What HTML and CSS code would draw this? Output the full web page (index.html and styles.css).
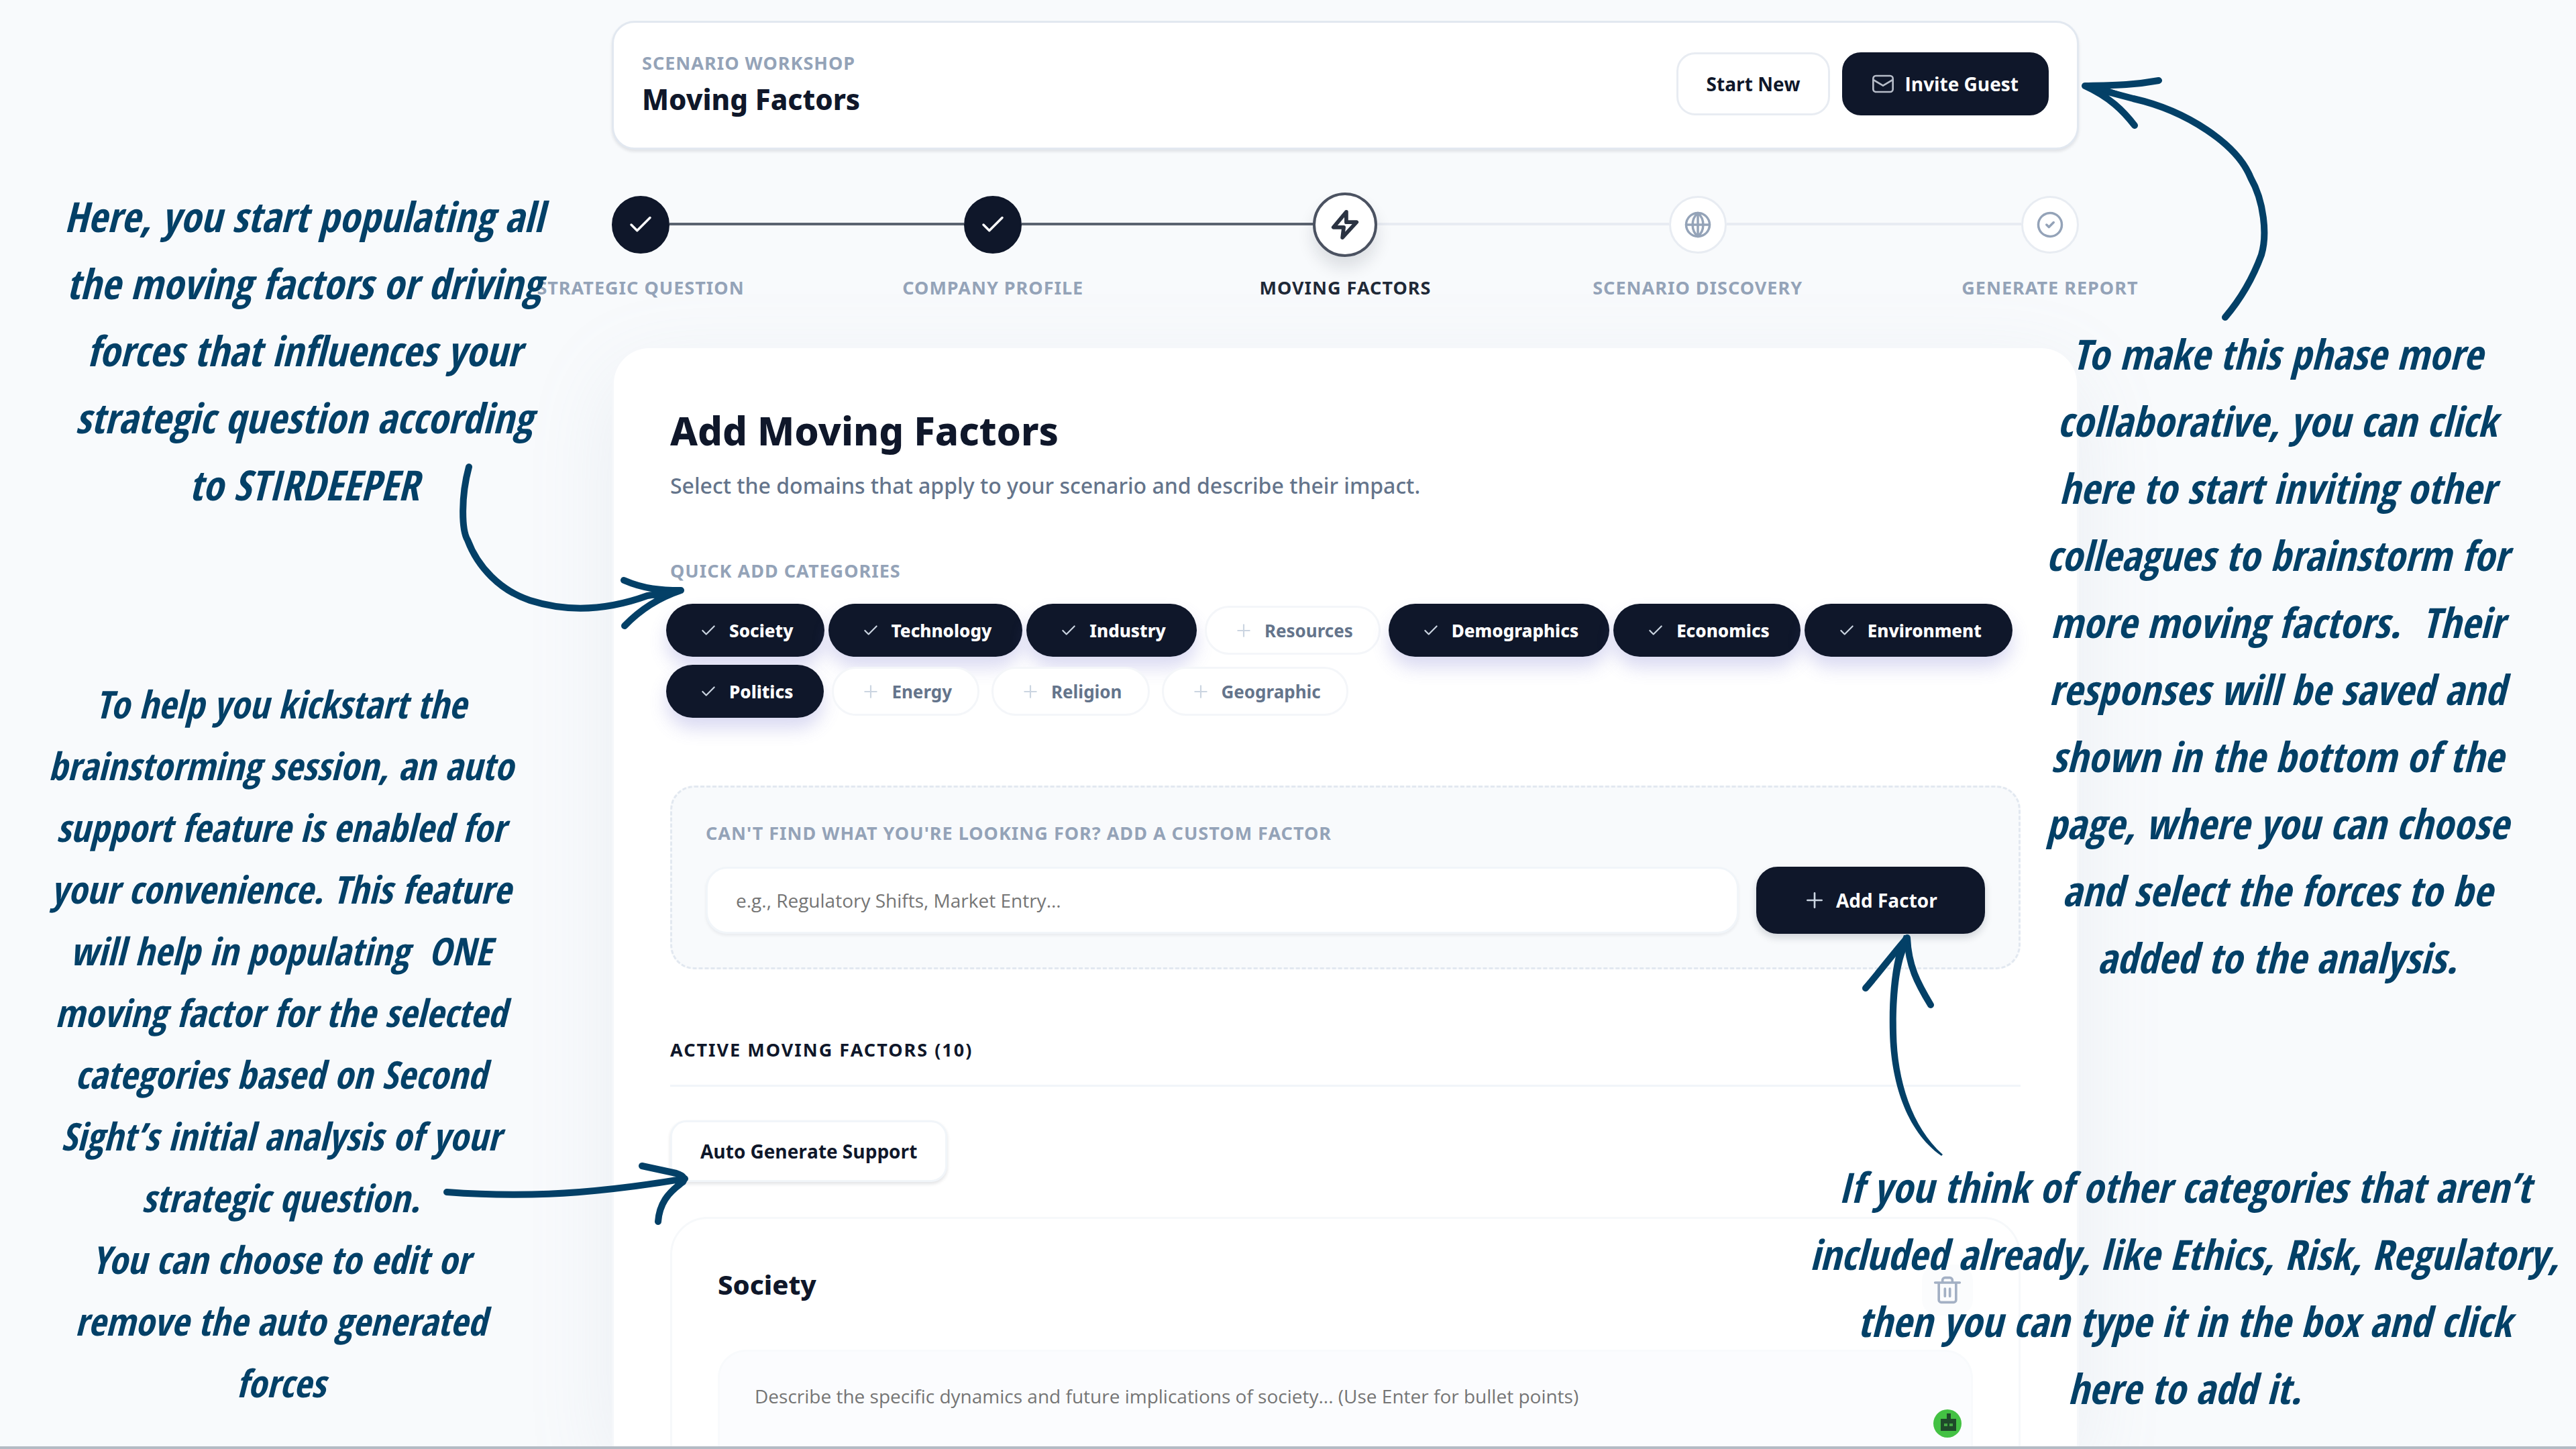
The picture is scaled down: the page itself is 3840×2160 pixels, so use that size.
FILE: index.html
```html
<!DOCTYPE html>
<html lang="en">
<head>
<meta charset="utf-8">
<meta name="viewport" content="width=device-width, initial-scale=1">
<title>Scenario Workshop - Moving Factors</title>
<link rel="stylesheet" href="styles.css">
</head>
<body>
<svg class="sprite" aria-hidden="true">
  <symbol id="check" viewBox="0 0 24 24"><path d="M20 6 9 17l-5-5"/></symbol>
  <symbol id="plus" viewBox="0 0 24 24"><path d="M12 4v16M4 12h16"/></symbol>
</svg>
<div class="page">
  <div class="workspace">
    <header class="topbar">
      <div class="topbar-text">
        <p class="eyebrow">SCENARIO WORKSHOP</p>
        <h1 class="topbar-title">Moving Factors</h1>
      </div>
      <div class="topbar-actions">
        <button class="btn btn-light" type="button">Start New</button>
        <button class="btn btn-dark" type="button">
          <svg class="icon icon-mail" viewBox="0 0 24 24"><rect x="1" y="3" width="22" height="18" rx="3"/><path d="m2 8 10 6 10-6"/></svg>
          Invite Guest
        </button>
      </div>
    </header>

    <ol class="steps">
      <li class="step">
        <span class="dot dot-done"><svg class="icon"><use href="#check"/></svg></span>
        <span class="step-label">STRATEGIC QUESTION</span>
      </li>
      <li class="rail rail-done"></li>
      <li class="step">
        <span class="dot dot-done"><svg class="icon"><use href="#check"/></svg></span>
        <span class="step-label">COMPANY PROFILE</span>
      </li>
      <li class="rail rail-done"></li>
      <li class="step step-current">
        <span class="dot dot-current"><svg class="icon" viewBox="0 0 24 24"><path d="M13 2 3 14h8l-1 8 11-12h-8z"/></svg></span>
        <span class="step-label">MOVING FACTORS</span>
      </li>
      <li class="rail"></li>
      <li class="step">
        <span class="dot"><svg class="icon" viewBox="0 0 24 24"><circle cx="12" cy="12" r="10"/><path d="M2 12h20M12 2v20M12 2c6 5 6 15 0 20M12 2c-6 5-6 15 0 20"/></svg></span>
        <span class="step-label">SCENARIO DISCOVERY</span>
      </li>
      <li class="rail"></li>
      <li class="step">
        <span class="dot"><svg class="icon" viewBox="0 0 24 24"><circle cx="12" cy="12" r="10"/><path d="m9 12 2 2 4-4"/></svg></span>
        <span class="step-label">GENERATE REPORT</span>
      </li>
    </ol>

    <main class="panel">
      <h2 class="panel-title">Add Moving Factors</h2>
      <p class="panel-sub">Select the domains that apply to your scenario and describe their impact.</p>

      <h3 class="eyebrow">QUICK ADD CATEGORIES</h3>
      <div class="chips">
        <button class="chip chip-on" type="button"><svg class="icon"><use href="#check"/></svg>Society</button>
        <button class="chip chip-on" type="button"><svg class="icon"><use href="#check"/></svg>Technology</button>
        <button class="chip chip-on" type="button"><svg class="icon"><use href="#check"/></svg>Industry</button>
        <button class="chip" type="button"><svg class="icon"><use href="#plus"/></svg>Resources</button>
        <button class="chip chip-on" type="button"><svg class="icon"><use href="#check"/></svg>Demographics</button>
        <button class="chip chip-on" type="button"><svg class="icon"><use href="#check"/></svg>Economics</button>
        <button class="chip chip-on" type="button"><svg class="icon"><use href="#check"/></svg>Environment</button>
        <button class="chip chip-on" type="button"><svg class="icon"><use href="#check"/></svg>Politics</button>
        <button class="chip" type="button"><svg class="icon"><use href="#plus"/></svg>Energy</button>
        <button class="chip" type="button"><svg class="icon"><use href="#plus"/></svg>Religion</button>
        <button class="chip" type="button"><svg class="icon"><use href="#plus"/></svg>Geographic</button>
      </div>

      <form class="custom">
        <label class="eyebrow" for="custom-factor">CAN'T FIND WHAT YOU'RE LOOKING FOR? ADD A CUSTOM FACTOR</label>
        <div class="custom-row">
          <input class="custom-input" id="custom-factor" type="text" placeholder="e.g., Regulatory Shifts, Market Entry...">
          <button class="btn btn-dark btn-add" type="button"><svg class="icon"><use href="#plus"/></svg>Add Factor</button>
        </div>
      </form>

      <h3 class="active-title">ACTIVE MOVING FACTORS (10)</h3>
      <button class="btn btn-light btn-auto" type="button">Auto Generate Support</button>

      <section class="factor">
        <div class="factor-head">
          <h4 class="factor-title"><label for="society-text">Society</label></h4>
          <button class="trash" type="button" aria-label="Remove">
            <svg class="icon" viewBox="0 0 24 24"><path d="M2 6h20M19 6v14a2 2 0 0 1-2 2H7a2 2 0 0 1-2-2V6M8 6V4a2 2 0 0 1 2-2h4a2 2 0 0 1 2 2v2M10 11v6M14 11v6"/></svg>
          </button>
        </div>
        <div class="factor-body">
          <textarea class="factor-text" id="society-text" placeholder="Describe the specific dynamics and future implications of society... (Use Enter for bullet points)"></textarea>
          <svg class="bot" viewBox="0 0 44 44"><circle cx="22" cy="22" r="21" fill="#43c143"/><path fill="#1f4a2a" d="M21 7h6v8h8v18H12V15h9z"/><path fill="#43a843" d="M17 22h5v4h-5zM25 22h5v4h-5z"/></svg>
        </div>
      </section>
    </main>
  </div>

  <p class="note note-factors">Here, you start populating all<br>the moving factors or driving<br>forces that influences your<br>strategic question according<br>to STIRDEEPER</p>
  <p class="note note-support">To help you kickstart the<br>brainstorming session, an auto<br>support feature is enabled for<br>your convenience. This feature<br>will help in populating &nbsp;ONE<br>moving factor for the selected<br>categories based on Second<br>Sight’s initial analysis of your<br>strategic question.<br>You can choose to edit or<br>remove the auto generated<br>forces</p>
  <p class="note note-invite">To make this phase more<br>collaborative, you can click<br>here to start inviting other<br>colleagues to brainstorm for<br>more moving factors. &nbsp;Their<br>responses will be saved and<br>shown in the bottom of the<br>page, where you can choose<br>and select the forces to be<br>added to the analysis.</p>
  <p class="note note-custom">If you think of other categories that aren’t<br>included already, like Ethics, Risk, Regulatory,<br>then you can type it in the box and click<br>here to add it.</p>

  <svg class="arrows" viewBox="0 0 3840 2160" aria-hidden="true">
    <path d="M699 696C687 740 688 790 697 805C712 845 745 880 790 895C850 914 910 908 965 888L1015 880M930 865C960 878 985 880 1015 880M931 933C955 908 985 890 1015 880"/>
    <path d="M666 1777C760 1784 860 1784 1021 1757M957 1738L1008 1749Q1024 1754 1018 1762C995 1778 983 1795 981 1821"/>
    <path d="M3317 473C3345 440 3360 410 3371 380C3380 350 3375 300 3355 265C3335 215 3260 165 3180 147L3108 128M3218 120C3180 127 3150 127 3108 128M3182 187C3165 165 3145 145 3108 128"/>
    <path d="M2781 1473C2805 1445 2825 1418 2843 1398C2845 1440 2858 1465 2878 1498"/>
    <path class="taper" d="M2826 1425C2818 1460 2816 1500 2817 1540C2819 1610 2840 1685 2894 1723L2896 1721C2850 1680 2828 1610 2827 1540C2826 1500 2829 1450 2840 1420L2846 1394L2838 1394Z"/>
    <path class="taper" d="M3108 127L3145 132L3180 144L3150 142Z"/>
    <path class="taper" d="M1014 881L980 880L960 890L985 893Z"/>
  </svg>
</div>
</body>
</html>
```
FILE: styles.css
```css
* { box-sizing: border-box; }

body {
  margin: 0;
  background: #f8fafc;
  color: #0f172a;
  font-family: "Noto Sans", "Open Sans", sans-serif;
}

h1, h2, h3, h4, p, ol { margin: 0; padding: 0; }
button, input, textarea { font: inherit; }

.sprite { display: none; }

.icon {
  width: 32px;
  height: 32px;
  flex: none;
  fill: none;
  stroke: currentColor;
  stroke-width: 2;
  stroke-linecap: round;
  stroke-linejoin: round;
}

.page {
  position: relative;
  height: 100vh;
  overflow: hidden;
  border-bottom: 4px solid #b4bbc4;
}

.workspace {
  display: flex;
  flex-direction: column;
  height: 100%;
  padding: 31px 19.3% 0 23.75%;
}

.eyebrow {
  font-size: 27px;
  line-height: 36px;
  font-weight: 700;
  letter-spacing: 1px;
  color: #94a3b8;
}

/* Top bar */
.topbar {
  display: flex;
  flex: none;
  align-items: center;
  justify-content: space-between;
  height: 192px;
  padding: 0 42px 4px;
  background: #fff;
  border: 3px solid #e2e8f0;
  border-radius: 34px;
  box-shadow: 0 3px 4px rgba(15, 23, 42, .1);
}
.topbar-text { padding-top: 6px; }
.topbar-title {
  margin-top: 4px;
  font-size: 42px;
  line-height: 64px;
  font-weight: 800;
}
.topbar-actions { display: flex; gap: 18px; }

.btn {
  display: flex;
  align-items: center;
  justify-content: center;
  gap: 16px;
  height: 94px;
  padding: 0 42px;
  border: 3px solid #e8ecf2;
  border-radius: 28px;
  background: #fff;
  color: #0f172a;
  font-family: "Open Sans", "Noto Sans", sans-serif;
  font-size: 28px;
  font-weight: 700;
  white-space: nowrap;
}
.btn-dark {
  background: #0f172a;
  border-color: #0f172a;
  color: #fff;
}
.icon-mail { color: #b6bcc8; }

/* Progress steps */
.steps {
  display: flex;
  flex: none;
  height: 224px;
  margin-top: 69px;
  list-style: none;
}
.step {
  display: flex;
  flex-direction: column;
  align-items: center;
  gap: 33px;
  width: 86px;
}
.dot {
  position: relative;
  z-index: 1;
  display: flex;
  flex: none;
  align-items: center;
  justify-content: center;
  width: 86px;
  height: 86px;
  border: 3px solid #e8ecf2;
  border-radius: 50%;
  background: #fff;
  color: #94a3b8;
}
.dot .icon { width: 42px; height: 42px; }
.dot-done { background: #0f172a; border-color: #0f172a; color: #fff; }
.dot-current {
  width: 96px;
  height: 96px;
  margin: -5px;
  border: 4px solid #4b5261;
  color: #2b3342;
  box-shadow: 0 16px 24px rgba(15, 23, 42, .12);
}
.dot-current .icon { width: 46px; height: 46px; stroke-width: 3; }
.step-label {
  font-size: 27px;
  line-height: 36px;
  font-weight: 700;
  letter-spacing: 1px;
  color: #94a3b8;
  white-space: nowrap;
}
.step-current .step-label { color: #1f2937; }
.rail {
  flex: 1;
  height: 4px;
  margin-top: 40px;
  background: #e8ecf2;
}
.rail-done { background: #5b6370; }

/* Main panel */
.panel {
  flex: 1;
  min-height: 0;
  padding: 79px 84px 0;
  border: 3px solid #f5f7fa;
  border-bottom: 0;
  border-radius: 56px 56px 0 0;
  background: #fff;
  box-shadow: 0 40px 130px rgba(148, 163, 184, .13);
}
.panel-title {
  font-size: 58px;
  line-height: 88px;
  font-weight: 800;
}
.panel-sub {
  margin-bottom: 71px;
  font-size: 32px;
  line-height: 76px;
  font-weight: 500;
  color: #64748b;
}
.chips {
  display: flex;
  flex-wrap: wrap;
  gap: 18px;
  margin: 34px 0 104px;
}
.chip {
  display: flex;
  align-items: center;
  gap: 18px;
  height: 73px;
  padding: 0 38px 0 42px;
  border: 3px solid #f4f6f9;
  border-radius: 36px;
  background: #fff;
  color: #64748b;
  font-size: 26px;
  font-weight: 700;
}
.chip .icon { width: 26px; height: 26px; color: #cbd5e1; }
.chip-on {
  height: 79px;
  margin: -3px -6px;
  padding: 0 46px 0 50px;
  border: 0;
  border-radius: 40px;
  background: #0f172a;
  color: #fff;
  font-weight: 800;
  box-shadow: 0 16px 26px rgba(99, 102, 200, .24);
}

.custom {
  padding: 50px;
  border: 3px dashed #e2e8f0;
  border-radius: 36px;
  background: #f8fafc;
}
.custom .eyebrow { display: block; }
.custom-row {
  display: flex;
  gap: 26px;
  margin-top: 32px;
}
.custom-input {
  flex: 1;
  min-width: 0;
  height: 100px;
  padding: 0 42px;
  border: 3px solid #f1f5f9;
  border-radius: 32px;
  background: #fff;
  font-family: "Open Sans", "Noto Sans", sans-serif;
  font-size: 28px;
  box-shadow: 0 3px 4px rgba(15, 23, 42, .06);
}
.custom-input::placeholder, .factor-text::placeholder { color: #757575; opacity: 1; }
.btn-add { height: 100px; padding: 0 68px; border-radius: 32px; box-shadow: 0 6px 12px rgba(15, 23, 42, .16); }
.btn-add .icon { color: #cbd5e1; }

.active-title {
  margin-top: 100px;
  padding-bottom: 32px;
  border-bottom: 3px solid #f1f5f9;
  font-size: 27px;
  line-height: 40px;
  font-weight: 700;
  letter-spacing: 2px;
}
.btn-auto {
  margin-top: 50px;
  height: 92px;
  border-color: #f1f5f9;
  border-radius: 24px;
  box-shadow: 0 3px 5px rgba(15, 23, 42, .12);
}

.factor {
  margin-top: 52px;
  padding: 68px;
  border: 3px solid #f6f8fa;
  border-radius: 56px;
}
.factor-head {
  display: flex;
  align-items: flex-start;
  justify-content: space-between;
  height: 127px;
}
.factor-title {
  font-size: 40px;
  line-height: 60px;
  font-weight: 800;
}
.trash {
  display: flex;
  align-items: center;
  justify-content: center;
  width: 76px;
  height: 76px;
  border: 0;
  border-radius: 24px;
  background: #fbfcfd;
  color: #a3b0c4;
}
.trash .icon { width: 44px; height: 44px; }
.factor-body { position: relative; }
.factor-text {
  display: block;
  width: 100%;
  height: 300px;
  padding: 44px 52px;
  border: 3px solid #f8fafc;
  border-radius: 42px;
  background: #fbfcfe;
  font-family: "Open Sans", "Noto Sans", sans-serif;
  font-size: 28px;
  line-height: 44px;
  resize: none;
}
.bot {
  position: absolute;
  top: 88px;
  right: 16px;
  width: 44px;
  height: 44px;
}

/* Handwritten notes and arrows over the page */
.note {
  position: absolute;
  color: #034067;
  font-family: "Liberation Sans Narrow", "Open Sans Condensed", "Lato", sans-serif;
  font-size: 62px;
  line-height: 100px;
  font-style: italic;
  font-weight: 700;
  text-align: center;
  white-space: nowrap;
}
.note-factors { top: 272px; left: 1.8%; width: 20%; }
.note-support { top: 1003px; left: .9%; width: 20%; font-size: 57px; line-height: 92px; }
.note-invite { top: 477px; right: 1.1%; width: 21%; }
.note-custom { top: 1719px; right: .2%; width: 30%; }

.arrows {
  position: absolute;
  inset: 0 0 auto;
  width: 100%;
  fill: none;
  stroke: #034067;
  stroke-width: 10;
  stroke-linecap: round;
  stroke-linejoin: round;
  pointer-events: none;
}
.taper { fill: #034067; stroke: none; }
```
